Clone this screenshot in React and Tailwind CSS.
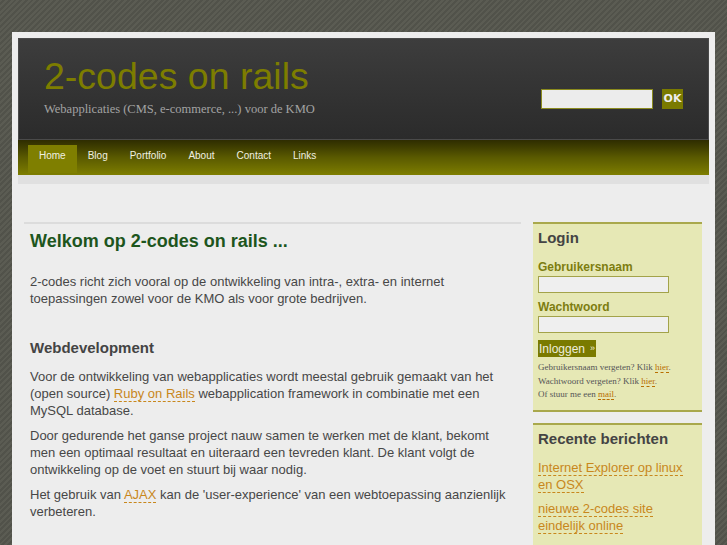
import React from 'react';

const navItems = ['Home', 'Blog', 'Portfolio', 'About', 'Contact', 'Links'];

const Link = ({ children }) => (
  <a href="#" className="text-[#c8871c] border-b border-dashed border-[#c8871c]">
    {children}
  </a>
);

const SmallLink = ({ children }) => (
  <a href="#" className="text-[#b86e00] border-b border-dashed border-[#b86e00]">
    {children}
  </a>
);

export default function App() {
  return (
    <div className="min-h-screen w-full px-3 pt-[32px] bg-[repeating-linear-gradient(135deg,#5b5c53_0px,#5b5c53_2px,#51524a_2px,#51524a_4px)] font-['Liberation_Sans',Arial,sans-serif]">
      <div className="bg-[#ededed] p-[6px] pb-0 min-h-[520px]">
        {/* Header */}
        <div className="flex h-[102px] items-start justify-between bg-gradient-to-b from-[#3d3d3d] to-[#2b2b2b] border border-[#4a4a4a]">
          <div className="pl-[25px] pt-[15px]">
            <h1 className="text-[37.5px] leading-[44px] text-[#7d7d00]">2-codes on rails</h1>
            <p className="mt-[3px] text-[12.5px] leading-[16px] text-[#a3a3a3] font-['Liberation_Serif',serif]">
              Webapplicaties (CMS, e-commerce, ...) voor de KMO
            </p>
          </div>
          <div className="mt-[50px] mr-[25px] flex items-center gap-[9px]">
            <input className="h-[20px] w-[112px] bg-[#ececec] border border-[#8a8a1e] outline-none" />
            <button className="h-[20px] w-[21px] bg-[#7a7a00] text-[11px] font-bold text-[#eee] font-['DejaVu_Sans',sans-serif]">
              OK
            </button>
          </div>
        </div>

        {/* Nav */}
        <div className="flex h-[35px] pt-[5px] pl-[10px] bg-gradient-to-b from-[#2e2c00] via-[#5a5a00] to-[#7e7e00]">
          {navItems.map((item, i) => (
            <a
              key={item}
              href="#"
              className={
                i === 0
                  ? 'h-[28px] px-[11px] pt-[5px] text-[10px] leading-[12px] text-[#f0f0e0] bg-[#7f7f00]'
                  : 'h-[28px] px-[11px] pt-[5px] text-[10px] leading-[12px] text-[#f0f0e0]'
              }
            >
              {item}
            </a>
          ))}
        </div>
        <div className="h-[9px] bg-[#e0e0e0]" />

        {/* Content */}
        <div className="flex pt-[38px] pl-[6px] pr-[7px]">
          <div className="w-[497px] border-t-2 border-[#dcdcdc] pl-[6px] pr-[12px] text-[#474747]">
            <h2 className="mt-[5px] text-[18px] leading-[24px] font-bold text-[#1d561d]">
              Welkom op 2-codes on rails ...
            </h2>
            <p className="mt-[20px] text-[13px] leading-[17px]">
              2-codes richt zich vooral op de ontwikkeling van intra-, extra- en internet toepassingen zowel voor de KMO als
              voor grote bedrijven.
            </p>
            <h3 className="mt-[31px] text-[15px] leading-[20px] font-bold text-[#444]">Webdevelopment</h3>
            <p className="mt-[10px] text-[13px] leading-[17px]">
              Voor de ontwikkeling van webapplicaties wordt meestal gebruik gemaakt van het (open source){' '}
              <Link>Ruby on Rails</Link> webapplication framework in combinatie met een MySQL database.
            </p>
            <p className="mt-[8px] text-[13px] leading-[17px]">
              Door gedurende het ganse project nauw samen te werken met de klant, bekomt men een optimaal resultaat en
              uiteraard een tevreden klant. De klant volgt de ontwikkeling op de voet en stuurt bij waar nodig.
            </p>
            <p className="mt-[8px] text-[13px] leading-[17px]">
              Het gebruik van <Link>AJAX</Link> kan de 'user-experience' van een webtoepassing aanzienlijk verbeteren.
            </p>
          </div>

          <div className="ml-[12px] w-[169px]">
            <div className="border-y-2 border-[#a9a84c] bg-[#e6e8b5] px-[5px] pt-[4px] pb-[8px]">
              <h3 className="text-[15px] leading-[20px] font-bold text-[#444]">Login</h3>
              <label className="mt-[11px] block text-[12px] leading-[16px] font-bold text-[#7d7d10]">Gebruikersnaam</label>
              <input className="mt-[1px] block h-[17px] w-[131px] bg-[#efefef] border border-[#a3a34a] outline-none" />
              <label className="mt-[6px] block text-[12px] leading-[16px] font-bold text-[#7d7d10]">Wachtwoord</label>
              <input className="mt-[1px] block h-[17px] w-[131px] bg-[#efefef] border border-[#a3a34a] outline-none" />
              <button className="mt-[7px] flex h-[17px] items-center bg-[#7a7a00] px-[1px] text-[12px] text-[#eeeedd]">
                Inloggen <span className="ml-[5px] text-[9px]">»</span>
              </button>
              <div className="mt-[4px] font-['Liberation_Serif',serif] text-[9px] leading-[13.5px] text-[#555]">
                <p>
                  Gebruikersnaam vergeten? Klik <SmallLink>hier</SmallLink>.
                </p>
                <p>
                  Wachtwoord vergeten? Klik <SmallLink>hier</SmallLink>.
                </p>
                <p>
                  Of stuur me een <SmallLink>mail</SmallLink>.
                </p>
              </div>
            </div>

            <div className="mt-[11px] border-t-2 border-[#a9a84c] bg-[#e6e8b5] px-[5px] pt-[4px] pb-[20px]">
              <h3 className="text-[15px] leading-[20px] font-bold text-[#444]">Recente berichten</h3>
              <ul className="mt-[10px] text-[13px] leading-[17px]">
                <li>
                  <Link>Internet Explorer op linux en OSX</Link>
                </li>
                <li className="mt-[7px]">
                  <Link>nieuwe 2-codes site eindelijk online</Link>
                </li>
              </ul>
            </div>
          </div>
        </div>
      </div>
    </div>
  );
}
